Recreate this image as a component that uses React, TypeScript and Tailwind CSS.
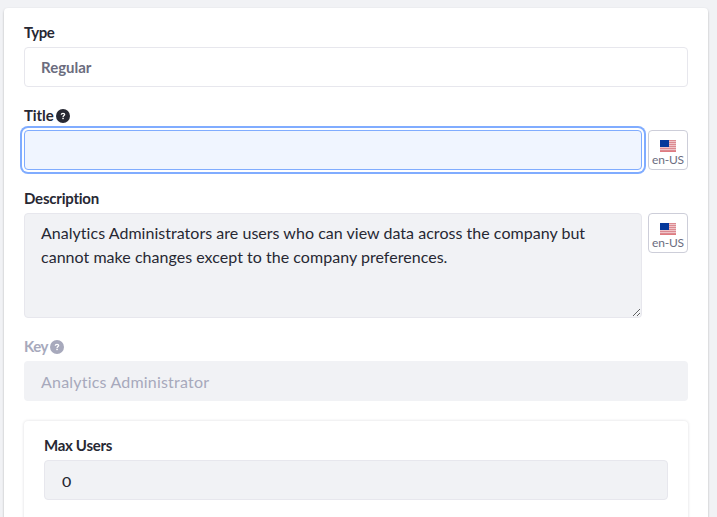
import React from "react";

function HelpIcon() {
  return (
    <svg className="ml-[2px] h-[14px] w-[14px] shrink-0" viewBox="0 0 16 16">
      <circle cx="8" cy="8" r="8" fill="currentColor" />
      <path
        d="M6 6.500C6.100 5.400 6.900 4.900 8 4.900c1.200 0 1.900.6 1.900 1.400C9.900 7.400 8.100 7.500 8.100 9"
        fill="none"
        stroke="#fff"
        strokeWidth="1.500"
      />
      <rect x="7.200" y="10" width="1.700" height="1.600" fill="#fff" />
    </svg>
  );
}

function Flag() {
  return (
    <svg className="h-[12px] w-[16px]" viewBox="0 0 16 12" shapeRendering="crispEdges">
      <rect width="16" height="12" fill="#efc4c8" />
      {[0, 2, 4, 6, 8, 10].map((y) => (
        <rect key={y} y={y} width="16" height="1" fill="#dc8a91" />
      ))}
      <rect y="11" width="16" height="1" fill="#e07b80" />
      <rect width="9" height="7" fill="#06399b" />
    </svg>
  );
}

function LocaleButton() {
  return (
    <button
      type="button"
      className="flex h-10 w-10 shrink-0 flex-col items-center rounded-[4px] border border-[#cdced9] bg-white pt-[9px] text-[#6b6c7e]"
    >
      <Flag />
      <span className="mt-px whitespace-nowrap text-[12px] leading-[14px] tracking-[-0.2px]">en-US</span>
    </button>
  );
}

function Label({ children }: { children: React.ReactNode }) {
  return (
    <label className="mb-[3px] flex h-[21px] items-center text-[15px] font-bold leading-[21px]">
      {children}
    </label>
  );
}

export default function App() {
  return (
    <div className="h-[517px] overflow-hidden bg-[#f1f2f5] pl-1 pr-[9px] pt-2 font-['Lato','Noto_Sans',sans-serif] text-[#272833]">
      <main className="h-[540px] rounded-[4px] bg-white px-5 pt-[15px] shadow-[0_1px_3px_-1px_rgba(0,0,0,0.6)]">
        <Label><span className="-mt-[2px] tracking-[-0.5px]">Type</span></Label>
        <div className="flex h-10 items-center rounded-[4px] border border-[#e7e7ed] px-4 text-[15px] font-bold text-[#6b6c7e]">
          <span className="pt-px">Regular</span>
        </div>

        <div className="mt-[19px]">
          <Label><span className="-mt-[2px] tracking-[-0.1px]">Title</span><span className="-mt-px"><HelpIcon /></span></Label>
          <div className="flex gap-[6px]">
            <input
              aria-label="Title"
              className="h-10 min-w-0 flex-1 rounded-[4px] border border-[#80acff] bg-[#f0f5ff] px-4 shadow-[0_0_0_2px_#fff,0_0_0_4px_#80acff] outline-none"
            />
            <LocaleButton />
          </div>
        </div>

        <div className="mt-[19px]">
          <Label><span className="-mt-[2px] tracking-[-0.22px]">Description</span></Label>
          <div className="flex items-start gap-[6px]">
            <textarea
              aria-label="Description"
              className="block h-[105px] min-w-0 flex-1 resize-y overflow-hidden rounded-[4px] border border-[#e7e7ed] bg-[#f1f2f5] px-4 py-[7px] text-[16px] leading-6 tracking-[0.03px]"
              defaultValue={"Analytics Administrators are users who can view data across the company but\ncannot make changes except to the company preferences."}
            />
            <LocaleButton />
          </div>
        </div>

        <div className="mt-[19px] text-[#a7a9bc]">
          <Label><span className="-mt-[2px] tracking-[-0.5px]">Key</span><span className="-mt-px"><HelpIcon /></span></Label>
          <div className="flex h-10 items-center rounded-[4px] bg-[#f1f2f5] px-[17px] text-[16px]">
            <span className="pt-[2px] tracking-[0.2px]">Analytics Administrator</span>
          </div>
        </div>

        <section className="mt-5 h-[130px] rounded-[4px] bg-white px-5 pt-[15px] shadow-[0_0_3px_rgba(39,40,51,0.17)]">
          <Label><span className="-mt-[2px] tracking-[-0.3px]">Max Users</span></Label>
          <div className="flex h-10 items-center rounded-[4px] border border-[#e7e7ed] bg-[#f1f2f5] px-[17px] text-[16px]">
            <span className="mt-[3px] inline-block scale-y-[0.78] font-medium">0</span>
          </div>
        </section>
      </main>
    </div>
  );
}
